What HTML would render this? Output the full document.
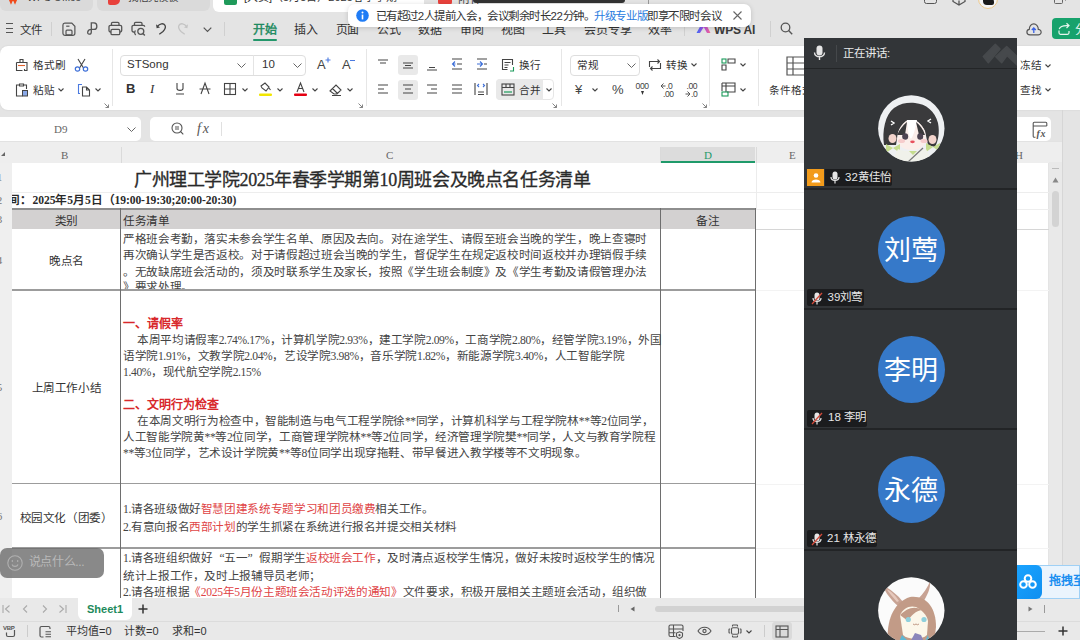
<!DOCTYPE html>
<html lang="zh-CN">
<head>
<meta charset="utf-8">
<style>
*{box-sizing:border-box;margin:0;padding:0}
html,body{width:1080px;height:640px;overflow:hidden;background:#e4e4e4;font-family:"Liberation Sans",sans-serif;color:#333;position:relative}
.a{position:absolute}
.t{position:absolute;white-space:nowrap;line-height:1}
svg{position:absolute;overflow:visible}
/* sheet */
.cell{position:absolute;white-space:nowrap;font-family:"Liberation Serif",serif;font-size:11.6px;color:#444;line-height:16px;letter-spacing:-0.36px}
.red{color:#e04446}
.vl{position:absolute;width:1px;background:#5a5a5a}
.hl{position:absolute;height:1px;background:#5a5a5a}
.gv{position:absolute;width:1px;background:#e3e3e3}
.gh{position:absolute;height:1px;background:#e3e3e3}
.lbl{position:absolute;height:17px;background:#1b1c1e;border-radius:2px;color:#e6e6e6;font-size:11.5px;line-height:17px;white-space:nowrap}
.av{position:absolute;width:67px;height:67px;border-radius:50%;background:#3679c9;color:#fff;font-size:27px;line-height:71px;text-align:center;left:877.7px;letter-spacing:-0.5px;text-indent:-0.5px}
</style>
</head>
<body>
<!-- ============ TOP TAB STRIP ============ -->
<div class="a" style="left:0;top:0;width:93px;height:11px;background:#dadada;border-radius:0 0 6px 6px"></div>
<div class="t" style="left:27px;top:-8px;font-size:10.5px;color:#444">WPS Office</div>
<svg style="left:8px;top:-4px" width="10" height="7" viewBox="0 0 10 7"><path d="M0.5 0.5L3 6.5 5 2 7 6.5 9.5 0.5" fill="none" stroke="#f04a1a" stroke-width="1.8"/></svg>
<div class="a" style="left:97px;top:0;width:113px;height:11px;background:#dadada;border-radius:0 0 6px 6px"></div>
<div class="a" style="left:108px;top:-2px;width:12px;height:6.5px;background:#e8413c;border-radius:0 0 5px 2px"></div>
<div class="t" style="left:128px;top:-8px;font-size:10.5px;color:#444">找稻壳模板</div>
<div class="a" style="left:213px;top:0;width:211px;height:12px;background:#fff;border-radius:0 0 6px 6px"></div>
<div class="a" style="left:224px;top:-2px;width:13px;height:7px;background:#1f9a5a;border-radius:0 0 2px 2px"></div>
<div class="t" style="left:244px;top:-8px;font-size:11px;color:#333">[大赛]（5月5日）2025春季学期</div>
<div class="a" style="left:438px;top:0;width:14px;height:5px;background:#e8413c;border-radius:0 0 3px 3px"></div>
<div class="t" style="left:458px;top:-7px;font-size:12px;color:#444">附件</div>
<div class="a" style="left:473px;top:0;width:152px;height:3px;background:#333;border-radius:0 0 4px 4px"></div>
<div class="a" style="left:648px;top:0;width:1px;height:4px;background:#999"></div>
<div class="a" style="left:924px;top:-4px;width:12.5px;height:8.3px;border:1.3px solid #555;border-radius:2.5px"></div>
<svg style="left:952px;top:-3px" width="14" height="9" viewBox="0 0 14 9"><path d="M1 0V4.5L7 8 13 4.5V0 M7 3.5V8" fill="none" stroke="#555" stroke-width="1.3"/></svg>
<div class="a" style="left:978px;top:-11.5px;width:20px;height:20px;border:1.6px solid #efc98a;border-radius:50%;background:#f4f4f4;overflow:hidden"><div style="position:absolute;left:4px;top:7px;width:11px;height:8px;background:#1a1a1a;border-radius:3px 5px 2px 4px"></div></div>
<div class="a" style="left:1054px;top:-4px;width:9px;height:7.5px;border:1.2px solid #666;border-radius:1.5px;background:#e4e4e4"></div>
<div class="a" style="left:1058px;top:-6px;width:8px;height:7px;border:1.2px solid #666;border-radius:1.5px;border-left:none;border-bottom:none"></div>

<!-- ============ MENU ROW ============ -->
<div id="menu">
<div class="a" style="left:6px;top:23px;width:7px;height:1.3px;background:#555"></div>
<div class="a" style="left:6px;top:27.5px;width:7px;height:1.3px;background:#555"></div>
<div class="a" style="left:6px;top:32px;width:7px;height:1.3px;background:#555"></div>
<div class="t" style="left:20px;top:24.5px;font-size:11.5px;color:#333">文件</div>
<div class="a" style="left:51px;top:22px;width:1px;height:14px;background:#d0d0d0"></div>
<!-- save -->
<svg style="left:62.3px;top:21.6px" width="14" height="14" viewBox="0 0 15 15"><path d="M3 1.2H10.5L13.8 4.5V12A2.3 2.3 0 0 1 11.5 14.3H3.3A2.3 2.3 0 0 1 1 12V3.3A2.1 2.1 0 0 1 3 1.2z" fill="none" stroke="#555" stroke-width="1.3"/><path d="M4.5 4.5H8" stroke="#555" stroke-width="1.3"/><rect x="4.3" y="8.8" width="6.4" height="5" rx="1" fill="none" stroke="#555" stroke-width="1.3"/></svg>
<!-- share -->
<svg style="left:85px;top:21px" width="14" height="15" viewBox="0 0 14 15"><path d="M6.3 11V1.9H9C12.8 1.9 12.8 8.4 9 8.4H6C2.5 8.4 1.5 13.2 4.3 13.2C6.3 13.2 6.3 11.8 6.3 11" fill="none" stroke="#555" stroke-width="1.3"/></svg>
<!-- print -->
<svg style="left:108px;top:21px" width="15" height="15" viewBox="0 0 15 15"><path d="M3.5 4.3V2.5A1.2 1.2 0 0 1 4.7 1.3H9.8A1.2 1.2 0 0 1 11 2.5V4.3" fill="none" stroke="#555" stroke-width="1.3"/><path d="M3 11H2.5A1.5 1.5 0 0 1 1 9.5V5.8A1.5 1.5 0 0 1 2.5 4.3H12.2A1.5 1.5 0 0 1 13.7 5.8V9.5A1.5 1.5 0 0 1 12.2 11H11.8" fill="none" stroke="#555" stroke-width="1.3"/><rect x="3" y="8.3" width="8.8" height="5.4" rx="1.3" fill="none" stroke="#555" stroke-width="1.3"/></svg>
<!-- preview -->
<svg style="left:131px;top:21px" width="15" height="16" viewBox="0 0 15 16"><path d="M3.5 4.3V2.5A1.2 1.2 0 0 1 4.7 1.3H9.8A1.2 1.2 0 0 1 11 2.5V4.3" fill="none" stroke="#555" stroke-width="1.3"/><path d="M3 11H2.5A1.5 1.5 0 0 1 1 9.5V5.8A1.5 1.5 0 0 1 2.5 4.3H12.2A1.5 1.5 0 0 1 13.7 5.8" fill="none" stroke="#555" stroke-width="1.3"/><path d="M4.5 9.5C3.3 10.5 3.3 13 4.8 14" fill="none" stroke="#555" stroke-width="1.3"/><circle cx="9.8" cy="10.3" r="3" fill="none" stroke="#555" stroke-width="1.3"/><path d="M12 12.5L13.8 14.5" stroke="#555" stroke-width="1.4"/></svg>
<!-- undo -->
<svg style="left:152px;top:21px" width="15" height="15" viewBox="0 0 15 15"><path d="M5.5 5.3C7.5 2.5 11.5 1.8 13 4.3C14 6.3 13 8.5 11 10.5L7.3 13.2" fill="none" stroke="#444" stroke-width="1.3"/><path d="M4 3.3L4.6 7.2L8 6.5z" fill="#444"/></svg>
<!-- redo -->
<svg style="left:177px;top:21px" width="15" height="15" viewBox="0 0 15 15"><path d="M9.5 5.3C7.5 2.5 3.5 1.8 2 4.3C1 6.3 2 8.5 4 10.5L7.7 13.2" fill="none" stroke="#c4c4c4" stroke-width="1.3"/><path d="M11 3.3L10.4 7.2L7 6.5z" fill="#c4c4c4"/></svg>
<svg style="left:202.5px;top:26.5px" width="9" height="5" viewBox="0 0 9 5"><path d="M0.7 0.7l3.8 3.8 3.8-3.8" fill="none" stroke="#555" stroke-width="1.2"/></svg>
<div class="a" style="left:224px;top:22px;width:1px;height:14px;background:#d0d0d0"></div>
<div class="t" style="left:253px;top:24.3px;font-size:12px;color:#1d8a60;-webkit-text-stroke:0.45px #1d8a60">开始</div>
<div class="a" style="left:253px;top:38.5px;width:24px;height:2px;background:#23976b;border-radius:1px"></div>
<div class="t" style="left:294px;top:24.3px;font-size:12px;color:#333;letter-spacing:-0.1px">插入</div>
<div class="t" style="left:335.5px;top:24.3px;font-size:12px;color:#333;letter-spacing:-0.1px">页面</div>
<div class="t" style="left:377px;top:24.3px;font-size:12px;color:#333;letter-spacing:-0.1px">公式</div>
<div class="t" style="left:418px;top:24.3px;font-size:12px;color:#333;letter-spacing:-0.1px">数据</div>
<div class="t" style="left:460px;top:24.3px;font-size:12px;color:#333;letter-spacing:-0.1px">审阅</div>
<div class="t" style="left:501px;top:24.3px;font-size:12px;color:#333;letter-spacing:-0.1px">视图</div>
<div class="t" style="left:542px;top:24.3px;font-size:12px;color:#333;letter-spacing:-0.1px">工具</div>
<div class="t" style="left:584px;top:24.3px;font-size:12px;color:#333;letter-spacing:-0.1px">会员专享</div>
<div class="t" style="left:648px;top:24.3px;font-size:12px;color:#333;letter-spacing:-0.1px">效率</div>
<div class="a" style="left:684px;top:22px;width:1px;height:14px;background:#d0d0d0"></div>
<svg style="left:696px;top:22px" width="15" height="12" viewBox="0 0 15 12"><defs><linearGradient id="wg" x1="0" y1="0" x2="1" y2="0"><stop offset="0" stop-color="#3a6cf6"/><stop offset="0.55" stop-color="#b84de0"/><stop offset="1" stop-color="#f56a8a"/></linearGradient></defs><path d="M0.5 11L6 1H9.5L14.5 11H11L7.8 5L4 11z" fill="url(#wg)"/></svg>
<div class="t" style="left:714px;top:23.5px;font-size:12px;color:#3a3a3a;font-weight:bold;letter-spacing:-0.2px">WPS AI</div>
<div class="a" style="left:770px;top:21px;width:1px;height:16px;background:#d0d0d0"></div>
<svg style="left:780px;top:22px" width="13" height="13" viewBox="0 0 13 13"><circle cx="5.5" cy="5.5" r="4.3" fill="none" stroke="#555" stroke-width="1.3"/><path d="M8.6 8.6l3.6 3.6" stroke="#555" stroke-width="1.4"/></svg>
<!-- cloud -->
<svg style="left:1026px;top:21.5px" width="17" height="15" viewBox="0 0 17 15"><path d="M4 12.8H12.3C14.6 12.8 15.8 10.8 14.8 8.8C14.2 7.8 13.3 7.3 12.3 7.3C12.3 4 10 1.8 7.8 1.8C5.3 1.8 3.3 4 3.3 7.3C1.8 7.5 0.9 8.8 0.9 10C0.9 11.6 2.2 12.8 4 12.8z" fill="none" stroke="#555" stroke-width="1.2"/><path d="M7.8 11V6 M5.8 8L7.8 6L9.8 8" fill="none" stroke="#3a63e8" stroke-width="1.3"/></svg>
<div class="a" style="left:1052px;top:18px;width:40px;height:21px;background:#17a26c;border-radius:4px"></div>
<svg style="left:1057px;top:22px" width="14" height="14" viewBox="0 0 14 14"><path d="M2.2 7.2C3 4.5 6 3.2 11.5 3.6 M9.5 1.2L12 3.6 9.5 6" fill="none" stroke="#e6f6ee" stroke-width="1.2"/><path d="M2 8.5V10.8Q2 12.3 3.5 12.3H10.5Q12 12.3 12 10.8V9" fill="none" stroke="#e6f6ee" stroke-width="1.2"/></svg>
<div class="t" style="left:1075px;top:23.5px;font-size:12px;color:#e6f6ee">分</div>
</div>

<!-- ============ RIBBON ============ -->
<div class="a" style="left:0;top:46px;width:1080px;height:64px;background:#fff;border-radius:8px 0 0 8px;box-shadow:0 0 2px rgba(0,0,0,0.10)"></div>
<!-- clipboard group -->
<svg style="left:15px;top:58px" width="14" height="14" viewBox="0 0 14 14"><path d="M5 4V1.5h3V4 M1.5 4.5h10.5v2.5 M1.5 4.5v8h6 M12 7v5.5h-2.5v-1.5" fill="none" stroke="#444" stroke-width="1.1"/><path d="M3 7.5h7" stroke="#e0602b" stroke-width="1.1"/></svg>
<div class="t" style="left:33px;top:60px;font-size:10.6px;color:#333">格式刷</div>
<svg style="left:74px;top:58px" width="15" height="14" viewBox="0 0 15 14"><path d="M4 1l5.5 9 M11 1L5.5 10" stroke="#444" stroke-width="1.1" fill="none"/><circle cx="3.5" cy="11" r="2.2" fill="none" stroke="#3d6fd8" stroke-width="1.2"/><circle cx="11.5" cy="11" r="2.2" fill="none" stroke="#3d6fd8" stroke-width="1.2"/></svg>
<svg style="left:15px;top:83px" width="14" height="14" viewBox="0 0 14 14"><path d="M4.5 2H1.5v11h6 M9 2h2.5v4 M4.5 1h4v2h-4z" fill="none" stroke="#444" stroke-width="1.1"/><rect x="7.5" y="7.5" width="5" height="5.5" fill="#8aa9e8" stroke="#444" stroke-width="1"/></svg>
<div class="t" style="left:33px;top:85.3px;font-size:10.6px;color:#333">粘贴</div>
<svg style="left:58px;top:88px" width="6" height="4" viewBox="0 0 6 4"><path d="M0.5 0.5l2.5 2.5 2.5-2.5" fill="none" stroke="#444" stroke-width="1.1"/></svg>
<svg style="left:77px;top:83px" width="14" height="14" viewBox="0 0 14 14"><path d="M5 1.5H1.5v9H3" fill="none" stroke="#4b7ae0" stroke-width="1.1"/><path d="M5.5 4h4l3 3v6h-7z M9.5 4v3h3" fill="none" stroke="#444" stroke-width="1.1"/></svg>
<svg style="left:95px;top:88px" width="6" height="4" viewBox="0 0 6 4"><path d="M0.5 0.5l2.5 2.5 2.5-2.5" fill="none" stroke="#444" stroke-width="1.1"/></svg>
<svg style="left:104px;top:103px" width="5" height="5" viewBox="0 0 5 5"><path d="M0.5 0.5l4 4 M4.5 1.5v3h-3" fill="none" stroke="#777" stroke-width="0.9"/></svg>
<div class="a" style="left:112px;top:49px;width:1px;height:57px;background:#e6e6e6"></div>
<!-- font group -->
<div class="a" style="left:120px;top:54.5px;width:186px;height:21px;border:1px solid #dedede;border-radius:4px"></div>
<div class="a" style="left:253px;top:55px;width:1px;height:20px;background:#e4e4e4"></div>
<div class="t" style="left:127px;top:59px;font-size:11.5px;color:#333">STSong</div>
<svg style="left:237px;top:63px" width="9" height="5" viewBox="0 0 9 5"><path d="M0.5 0.5l4 4 4-4" fill="none" stroke="#666" stroke-width="1"/></svg>
<div class="t" style="left:262px;top:59px;font-size:11.5px;color:#333">10</div>
<svg style="left:293px;top:63px" width="9" height="5" viewBox="0 0 9 5"><path d="M0.5 0.5l4 4 4-4" fill="none" stroke="#666" stroke-width="1"/></svg>
<div class="t" style="left:317px;top:58px;font-size:13px;color:#444">A</div>
<svg style="left:325px;top:57px" width="6" height="6" viewBox="0 0 6 6"><path d="M3 0.5v5 M0.5 3h5" stroke="#4b7ae0" stroke-width="1.1"/></svg>
<div class="t" style="left:342px;top:58px;font-size:13px;color:#444">A</div>
<div class="a" style="left:350px;top:59.5px;width:5px;height:1px;background:#4b7ae0"></div>
<div class="t" style="left:126px;top:82px;font-size:13px;color:#333;font-weight:bold">B</div>
<div class="t" style="left:150px;top:82px;font-size:13px;color:#333;font-style:italic;font-family:'Liberation Serif',serif">I</div>
<svg style="left:175px;top:82px" width="10" height="13" viewBox="0 0 10 13"><path d="M2 1v5.5C2 9 8 9 8 6.5V1 M1 12h8" fill="none" stroke="#444" stroke-width="1.1"/></svg>
<svg style="left:199px;top:82px" width="12" height="13" viewBox="0 0 12 13"><path d="M2 12L6 1l4 11 M0.5 7h11" fill="none" stroke="#444" stroke-width="1.1"/></svg>
<svg style="left:224px;top:83px" width="12" height="12" viewBox="0 0 12 12"><rect x="0.5" y="0.5" width="11" height="11" fill="none" stroke="#444" stroke-width="1.1"/><path d="M6 0.5v11 M0.5 6h11" stroke="#444" stroke-width="1.1"/></svg>
<svg style="left:242px;top:88px" width="6" height="4" viewBox="0 0 6 4"><path d="M0.5 0.5l2.5 2.5 2.5-2.5" fill="none" stroke="#444" stroke-width="1.1"/></svg>
<svg style="left:259px;top:82px" width="13" height="14" viewBox="0 0 13 14"><path d="M2 4l4-3 4 4-3 4-4-3z M10 6l1.5 2" fill="none" stroke="#444" stroke-width="1.1"/><rect x="0" y="11.5" width="13" height="2.5" rx="1" fill="#f2e600"/></svg>
<svg style="left:277px;top:88px" width="6" height="4" viewBox="0 0 6 4"><path d="M0.5 0.5l2.5 2.5 2.5-2.5" fill="none" stroke="#444" stroke-width="1.1"/></svg>
<svg style="left:294px;top:82px" width="13" height="14" viewBox="0 0 13 14"><path d="M3 10L6.5 1 10 10 M4.3 6.5h4.5" fill="none" stroke="#444" stroke-width="1.1"/><rect x="0" y="11.5" width="13" height="2.5" rx="1" fill="#e50012"/></svg>
<svg style="left:312px;top:88px" width="6" height="4" viewBox="0 0 6 4"><path d="M0.5 0.5l2.5 2.5 2.5-2.5" fill="none" stroke="#444" stroke-width="1.1"/></svg>
<svg style="left:329px;top:83px" width="14" height="13" viewBox="0 0 14 13"><path d="M1 8l6-6 5 5-4 4H5z M3.5 5.5l5 5 M3 12.5h9" fill="none" stroke="#444" stroke-width="1.1"/></svg>
<svg style="left:347px;top:88px" width="6" height="4" viewBox="0 0 6 4"><path d="M0.5 0.5l2.5 2.5 2.5-2.5" fill="none" stroke="#444" stroke-width="1.1"/></svg>
<svg style="left:358px;top:103px" width="5" height="5" viewBox="0 0 5 5"><path d="M0.5 0.5l4 4 M4.5 1.5v3h-3" fill="none" stroke="#777" stroke-width="0.9"/></svg>
<div class="a" style="left:365.5px;top:49px;width:1px;height:57px;background:#e6e6e6"></div>
<!-- alignment group -->
<div class="a" style="left:398px;top:55px;width:20px;height:20px;background:#e9e9e9;border-radius:3px"></div>
<div class="a" style="left:398px;top:79.5px;width:20px;height:20px;background:#e9e9e9;border-radius:3px"></div>
<svg style="left:377px;top:58px" width="12" height="12" viewBox="0 0 12 12"><path d="M1 2h10 M3 5h6" stroke="#444" stroke-width="1.1"/></svg>
<svg style="left:402px;top:59px" width="12" height="12" viewBox="0 0 12 12"><path d="M1 4h10 M3 6.5h6 M1 9h10" stroke="#444" stroke-width="1.1"/></svg>
<svg style="left:426px;top:60px" width="12" height="12" viewBox="0 0 12 12"><path d="M3 7.5h6 M1 10h10" stroke="#444" stroke-width="1.1"/></svg>
<svg style="left:451px;top:58px" width="12" height="12" viewBox="0 0 12 12"><path d="M1 1h10 M1 11h10 M6 6h5" stroke="#444" stroke-width="1.1"/><path d="M4 3.5L1.5 6 4 8.5 M1.5 6h3" fill="none" stroke="#3d6fd8" stroke-width="1.1"/></svg>
<svg style="left:476px;top:58px" width="12" height="12" viewBox="0 0 12 12"><path d="M1 1h10 M1 11h10 M8 6h3" stroke="#444" stroke-width="1.1"/><path d="M4 3.5L6.5 6 4 8.5 M1 6h5" fill="none" stroke="#3d6fd8" stroke-width="1.1"/></svg>
<svg style="left:501px;top:58px" width="14" height="14" viewBox="0 0 14 14"><path d="M11.5 7V1.5H1.5v10h5 M3.5 4.5h6 M3.5 7h4 M3.5 9.5h3" fill="none" stroke="#444" stroke-width="1.1"/><path d="M9 13h3.5V9" fill="none" stroke="#1a9a5a" stroke-width="1.1"/></svg>
<div class="t" style="left:519px;top:60px;font-size:10.6px;color:#333">换行</div>
<svg style="left:377px;top:83px" width="12" height="12" viewBox="0 0 12 12"><path d="M1 2h10 M1 6h6 M1 10h10" stroke="#444" stroke-width="1.1"/></svg>
<svg style="left:402px;top:83px" width="12" height="12" viewBox="0 0 12 12"><path d="M1 2h10 M3 6h6 M1 10h10" stroke="#444" stroke-width="1.1"/></svg>
<svg style="left:426px;top:83px" width="12" height="12" viewBox="0 0 12 12"><path d="M1 2h10 M5 6h6 M1 10h10" stroke="#444" stroke-width="1.1"/></svg>
<svg style="left:451px;top:83px" width="12" height="12" viewBox="0 0 12 12"><path d="M1 2h10 M1 6h10 M1 10h10" stroke="#444" stroke-width="1.1"/></svg>
<svg style="left:474px;top:82px" width="14" height="14" viewBox="0 0 14 14"><path d="M1 1v12 M13 1v12 M4 10h6 M4 12.5h6" stroke="#444" stroke-width="1.1" fill="none"/><path d="M5 2L3.5 3.5 5 5 M9 2l1.5 1.5L9 5" fill="none" stroke="#3d6fd8" stroke-width="1.1"/></svg>
<div class="a" style="left:496px;top:79px;width:58px;height:20.5px;border:1px solid #e6e6e6;border-radius:4px"></div>
<div class="a" style="left:496px;top:79px;width:46.5px;height:20.5px;background:#e9e9e9;border-radius:4px 0 0 4px"></div>
<svg style="left:501px;top:83px" width="14" height="13" viewBox="0 0 14 13"><rect x="1" y="1" width="12" height="11" fill="none" stroke="#444" stroke-width="1.1"/><path d="M1 4.5h12 M5 1v3.5 M9 1v3.5" stroke="#444" stroke-width="1.1"/><path d="M3 9h8" stroke="#1a9a5a" stroke-width="1.2"/></svg>
<div class="t" style="left:519px;top:85.3px;font-size:10.6px;color:#333">合并</div>
<svg style="left:546px;top:88px" width="6" height="4" viewBox="0 0 6 4"><path d="M0.5 0.5l2.5 2.5 2.5-2.5" fill="none" stroke="#444" stroke-width="1.1"/></svg>
<svg style="left:552px;top:103px" width="5" height="5" viewBox="0 0 5 5"><path d="M0.5 0.5l4 4 M4.5 1.5v3h-3" fill="none" stroke="#777" stroke-width="0.9"/></svg>
<div class="a" style="left:561px;top:49px;width:1px;height:57px;background:#e6e6e6"></div>
<!-- number group -->
<div class="a" style="left:569.5px;top:55px;width:70px;height:20.5px;border:1px solid #dedede;border-radius:4px"></div>
<div class="t" style="left:577px;top:60px;font-size:10.6px;color:#333">常规</div>
<svg style="left:627px;top:63px" width="9" height="5" viewBox="0 0 9 5"><path d="M0.5 0.5l4 4 4-4" fill="none" stroke="#666" stroke-width="1"/></svg>
<svg style="left:648px;top:58px" width="14" height="14" viewBox="0 0 14 14"><path d="M1.5 9V3.5h10 M9.5 1.5l2 2-2 2 M12.5 5v5.5h-10 M4.5 12.5l-2-2 2-2" fill="none" stroke="#444" stroke-width="1.1"/></svg>
<div class="t" style="left:666px;top:60px;font-size:10.6px;color:#333">转换</div>
<svg style="left:691px;top:63px" width="6" height="4" viewBox="0 0 6 4"><path d="M0.5 0.5l2.5 2.5 2.5-2.5" fill="none" stroke="#444" stroke-width="1.1"/></svg>
<div class="t" style="left:575px;top:83px;font-size:13px;color:#444">¥</div>
<svg style="left:592px;top:88px" width="6" height="4" viewBox="0 0 6 4"><path d="M0.5 0.5l2.5 2.5 2.5-2.5" fill="none" stroke="#444" stroke-width="1.1"/></svg>
<div class="t" style="left:612px;top:83px;font-size:13px;color:#444">%</div>
<div class="t" style="left:635.5px;top:81.5px;font-size:8.6px;color:#444;letter-spacing:-0.4px">000</div>
<svg style="left:641px;top:91px" width="3" height="4" viewBox="0 0 3 4"><path d="M0 0h3L1.5 4z" fill="#333"/></svg>
<svg style="left:660px;top:82px" width="6" height="8" viewBox="0 0 6 8"><path d="M5.5 4H1 M3.5 1.5L1 4l2.5 2.5" fill="none" stroke="#555" stroke-width="1"/></svg>
<div class="t" style="left:666px;top:81.5px;font-size:8.6px;color:#444;letter-spacing:-0.4px">.0</div>
<div class="t" style="left:663px;top:89.5px;font-size:8.6px;color:#444;letter-spacing:-0.4px">.00</div>
<div class="t" style="left:686.5px;top:81.5px;font-size:8.6px;color:#444;letter-spacing:-0.4px">.00</div>
<svg style="left:685px;top:90px" width="6" height="8" viewBox="0 0 6 8"><path d="M0.5 4H5 M2.5 1.5L5 4 2.5 6.5" fill="none" stroke="#555" stroke-width="1"/></svg>
<div class="t" style="left:691px;top:89.5px;font-size:8.6px;color:#444;letter-spacing:-0.4px">.0</div>
<svg style="left:702px;top:103px" width="5" height="5" viewBox="0 0 5 5"><path d="M0.5 0.5l4 4 M4.5 1.5v3h-3" fill="none" stroke="#777" stroke-width="0.9"/></svg>
<div class="a" style="left:709px;top:49px;width:1px;height:57px;background:#e6e6e6"></div>
<svg style="left:721px;top:58px" width="15" height="14" viewBox="0 0 15 14"><rect x="1" y="1" width="4" height="4" fill="none" stroke="#1a9a5a" stroke-width="1.1"/><path d="M1 7h4v5H1z M7 1h7v4H7z" fill="none" stroke="#444" stroke-width="1.1"/></svg>
<svg style="left:740px;top:63px" width="6" height="4" viewBox="0 0 6 4"><path d="M0.5 0.5l2.5 2.5 2.5-2.5" fill="none" stroke="#444" stroke-width="1.1"/></svg>
<svg style="left:721px;top:82px" width="15" height="15" viewBox="0 0 15 15"><path d="M1 1h13v9H6 M1 4h13 M5 1v9 M1 1v8" fill="none" stroke="#444" stroke-width="1.1"/><rect x="1" y="10" width="6" height="4" fill="none" stroke="#1a9a5a" stroke-width="1.1"/></svg>
<svg style="left:740px;top:88px" width="6" height="4" viewBox="0 0 6 4"><path d="M0.5 0.5l2.5 2.5 2.5-2.5" fill="none" stroke="#444" stroke-width="1.1"/></svg>
<div class="a" style="left:758px;top:49px;width:1px;height:57px;background:#e6e6e6"></div>
<svg style="left:786px;top:56px" width="20" height="20" viewBox="0 0 20 20"><path d="M1 1h18v18H1z M1 7h18 M1 13h18 M7 1v18" fill="none" stroke="#555" stroke-width="1.2"/></svg>
<div class="t" style="left:769px;top:85.3px;font-size:10.6px;color:#333">条件格式</div>
<div class="t" style="left:1020px;top:60px;font-size:10.6px;color:#333">冻结</div>
<svg style="left:1045px;top:64px" width="6" height="4" viewBox="0 0 6 4"><path d="M0.5 0.5l2.5 2.5 2.5-2.5" fill="none" stroke="#444" stroke-width="1.1"/></svg>
<div class="t" style="left:1020px;top:85.3px;font-size:10.6px;color:#333">查找</div>
<svg style="left:1045px;top:88px" width="6" height="4" viewBox="0 0 6 4"><path d="M0.5 0.5l2.5 2.5 2.5-2.5" fill="none" stroke="#444" stroke-width="1.1"/></svg>

<!-- ============ FORMULA BAR ============ -->
<div class="a" style="left:0;top:117px;width:141px;height:23.5px;background:#fff;border-radius:0 5px 5px 0"></div>
<div class="t" style="left:54px;top:123.5px;font-size:11px;color:#666;font-family:'Liberation Serif',serif">D9</div>
<svg style="left:127px;top:127px" width="9" height="5" viewBox="0 0 9 5"><path d="M0.5 0.5l4 4 4-4" fill="none" stroke="#666" stroke-width="1"/></svg>
<div class="a" style="left:150px;top:117px;width:901px;height:24px;background:#fff;border-radius:5px"></div>
<svg style="left:171px;top:122px" width="13" height="13" viewBox="0 0 13 13"><circle cx="6" cy="6" r="5" fill="none" stroke="#555" stroke-width="1.1"/><path d="M9.5 9.5l2.8 2.8 M4 5h4 M4 7h4" stroke="#555" stroke-width="1.1"/></svg>
<div class="t" style="left:197px;top:122px;font-size:14px;color:#555;font-style:italic;font-family:'Liberation Serif',serif;letter-spacing:1.8px">fx</div>
<div class="a" style="left:221px;top:122px;width:1px;height:14px;background:#e0e0e0"></div>
<svg style="left:1031.5px;top:120.5px" width="17" height="18" viewBox="0 0 17 18"><path d="M3.5 16.3H2.3Q1.2 16.3 1.2 15.2V2.3Q1.2 1.2 2.3 1.2H13.7Q14.8 1.2 14.8 2.3V5 M1.2 5H14.8" fill="none" stroke="#555" stroke-width="1.1"/><text x="4.5" y="16" font-size="10" font-style="italic" font-weight="bold" fill="#555" font-family="Liberation Serif" letter-spacing="0.6">fx</text></svg>


<!-- ============ COLUMN HEADERS ============ -->
<div class="a" style="left:0;top:141.5px;width:1062px;height:21px;background:#eeeeee"></div><div class="a" style="left:0;top:140.5px;width:1062px;height:1.5px;background:#e2e2e2"></div>
<div class="a" style="left:660.3px;top:147px;width:95.2px;height:15.5px;background:#dcdcdc"></div>
<div class="a" style="left:660.3px;top:160.5px;width:95.2px;height:2px;background:#1f9a6a"></div>

<div class="gv" style="left:120.5px;top:147px;height:15.5px;background:#dadada"></div>
<div class="gv" style="left:660.3px;top:147px;height:15.5px;background:#dadada"></div>
<div class="gv" style="left:755.5px;top:147px;height:15.5px;background:#dadada"></div>
<svg style="left:0px;top:151px" width="6" height="6" viewBox="0 0 6 6"><path d="M5 1v4H1z" fill="#666"/></svg>
<div class="t" style="left:61px;top:150px;font-size:11px;color:#666;font-family:'Liberation Serif',serif">B</div>
<div class="t" style="left:386px;top:150px;font-size:11px;color:#666;font-family:'Liberation Serif',serif">C</div>
<div class="t" style="left:704px;top:150px;font-size:11px;color:#1f9a6a;font-family:'Liberation Serif',serif">D</div>
<div class="t" style="left:789px;top:150px;font-size:11px;color:#666;font-family:'Liberation Serif',serif">E</div>
<div class="t" style="left:1015px;top:150px;font-size:11px;color:#666;font-family:'Liberation Serif',serif">H</div>
<!-- row header -->
<div class="a" style="left:0;top:162.5px;width:11.6px;height:435.5px;background:#efefef"></div>
<div class="t" style="left:-3.3px;top:172px;font-size:11px;color:#777;font-family:'Liberation Serif',serif">1</div>
<div class="t" style="left:-3.3px;top:195px;font-size:11px;color:#777;font-family:'Liberation Serif',serif">2</div>
<div class="t" style="left:-3.3px;top:214px;font-size:11px;color:#777;font-family:'Liberation Serif',serif">3</div>
<div class="t" style="left:-3.3px;top:255px;font-size:11px;color:#777;font-family:'Liberation Serif',serif">4</div>
<div class="t" style="left:-3.3px;top:382px;font-size:11px;color:#777;font-family:'Liberation Serif',serif">5</div>
<div class="t" style="left:-3.3px;top:511px;font-size:11px;color:#777;font-family:'Liberation Serif',serif">6</div>
<!-- cells bg -->
<div class="a" style="left:11.6px;top:162.5px;width:1036.9px;height:435.5px;background:#fff"></div>
<!-- vscroll column -->
<div class="a" style="left:1048.5px;top:162px;width:13.5px;height:436px;background:#e9e9e9"></div>
<div class="a" style="left:1052px;top:168px;width:7px;height:1.2px;background:#bbb"></div>
<svg style="left:1052px;top:177px" width="7" height="6" viewBox="0 0 7 6"><path d="M3.5 0.5L6.5 5.5H0.5z" fill="#888"/></svg>
<div class="a" style="left:1052px;top:191px;width:7px;height:36px;background:#d3d3d3;border-radius:4px"></div>
<div class="a" style="left:1062px;top:110px;width:1px;height:530px;background:#d6d6d6"></div>
<!-- grid lines faint -->
<div class="gh" style="left:11.6px;top:191.5px;width:1037px;background:#ededed"></div>
<div class="gh" style="left:755.5px;top:208.5px;width:293px;background:#eeeeee"></div>
<div class="gh" style="left:755.5px;top:229px;width:293px;background:#d6d6d6"></div>
<div class="gh" style="left:755.5px;top:289.5px;width:293px;background:#f3f3f3"></div>
<div class="gh" style="left:755.5px;top:483.5px;width:293px;background:#f3f3f3"></div>
<div class="gh" style="left:755.5px;top:548px;width:293px;background:#f3f3f3"></div>
<div class="gv" style="left:755.5px;top:162.5px;height:46px;background:#ececec"></div>
<!-- header row fill -->
<div class="a" style="left:11.6px;top:208.7px;width:744px;height:20.7px;background:#d3d1d1"></div>
<!-- table borders -->
<div class="hl" style="left:11.6px;top:208.1px;width:744.4px;height:1.6px;background:#8e8e8e"></div>
<div class="hl" style="left:11.6px;top:288.9px;width:744.4px;height:1.7px;background:#9c9c9c"></div>
<div class="hl" style="left:11.6px;top:482.6px;width:744.4px;height:1.7px;background:#9c9c9c"></div>
<div class="hl" style="left:11.6px;top:547px;width:744.4px;height:1.7px;background:#9c9c9c"></div>
<div class="vl" style="left:119.9px;top:208.3px;height:389.7px;width:1.3px;background:#6e6e6e"></div>
<div class="vl" style="left:659.9px;top:208.3px;height:389.7px;width:1.3px;background:#6e6e6e"></div>
<div class="vl" style="left:754.9px;top:208.3px;height:389.7px;width:1.3px;background:#6e6e6e"></div>
<!-- title -->
<div class="cell" style="left:134px;top:169.5px;font-size:18px;line-height:20px;font-weight:normal;-webkit-text-stroke:0.3px #2a2a2a;color:#2a2a2a;letter-spacing:-0.4px">广州理工学院2025年春季学期第10周班会及晚点名任务清单</div>
<div class="a" style="left:11.7px;top:192.5px;width:500px;height:16px;overflow:hidden">
<div class="cell" style="right:479.5px;top:0.5px;font-size:11.6px;font-weight:bold;color:#2a2a2a;letter-spacing:0">时间：</div>
<div class="cell" id="r2" style="left:20.8px;top:0.5px;font-size:11.6px;font-weight:bold;color:#2a2a2a;letter-spacing:-0.08px">2025年5月5日（19:00-19:30;20:00-20:30)</div>
</div>
<div class="cell" style="left:54.5px;top:214px;color:#333">类别</div>
<div class="cell" style="left:123px;top:214px;color:#333">任务清单</div>
<div class="cell" style="left:696px;top:214px;color:#333">备注</div>
<div class="cell" style="left:49px;top:254.3px;color:#333">晚点名</div>
<div class="cell" style="left:31.5px;top:381.4px;color:#333">上周工作小结</div>
<div class="cell" style="left:19.5px;top:511.4px;color:#333">校园文化（团委）</div>
<!-- row 4 -->
<div class="a" style="left:121px;top:230px;width:539px;height:59px;overflow:hidden">
<div class="cell" style="left:2px;top:1.6px">严格班会考勤，落实未参会学生名单、原因及去向。对在途学生、请假至班会当晚的学生，晚上查寝时</div>
<div class="cell" style="left:2px;top:18.2px">再次确认学生是否返校。对于请假超过班会当晚的学生，督促学生在规定返校时间返校并办理销假手续</div>
<div class="cell" style="left:2px;top:34.7px">。无故缺席班会活动的，须及时联系学生及家长，按照《学生班会制度》及《学生考勤及请假管理办法</div>
<div class="cell" style="left:2px;top:50px">》要求处理。</div>
</div>
<!-- row 5 -->
<div class="cell red" style="left:122.5px;top:315.7px;font-weight:bold;font-size:12px;letter-spacing:0.1px;color:#d8282c">一、请假率</div>
<div class="cell" style="left:123px;top:333px">　 本周平均请假率2.74%.17%，计算机学院2.93%，建工学院2.09%，工商学院2.80%，经管学院3.19%，外国</div>
<div class="cell" style="left:123px;top:349px">语学院1.91%，文教学院2.04%，艺设学院3.98%，音乐学院1.82%，新能源学院3.40%，人工智能学院</div>
<div class="cell" style="left:123px;top:365px">1.40%，现代航空学院2.15%</div>
<div class="cell red" style="left:122.5px;top:396.7px;font-weight:bold;font-size:12px;letter-spacing:0.1px;color:#d8282c">二、文明行为检查</div>
<div class="cell" style="left:123px;top:414px">　 在本周文明行为检查中，智能制造与电气工程学院徐**同学，计算机科学与工程学院林**等2位同学，</div>
<div class="cell" style="left:123px;top:430px">人工智能学院黄**等2位同学，工商管理学院林**等2位同学，经济管理学院樊**同学，人文与教育学院程</div>
<div class="cell" style="left:123px;top:446px">**等3位同学，艺术设计学院黄**等8位同学出现穿拖鞋、带早餐进入教学楼等不文明现象。</div>
<!-- row 6 -->
<div class="cell" style="left:123px;top:502px">1.请各班级做好<span class="red">智慧团建系统专题学习和团员缴费</span>相关工作。</div>
<div class="cell" style="left:123px;top:520px">2.有意向报名<span class="red">西部计划</span>的学生抓紧在系统进行报名并提交相关材料</div>
<!-- row 7 -->
<div class="a" style="left:121px;top:548.5px;width:539px;height:49.5px;overflow:hidden">
<div class="cell" style="left:2px;top:2.8px">1.请各班组织做好<span style="padding-left:7px">“</span>五一<span style="padding-right:7px">”</span>假期学生<span class="red">返校班会工作</span>，及时清点返校学生情况，做好未按时返校学生的情况</div>
<div class="cell" style="left:2px;top:20.4px">统计上报工作，及时上报辅导员老师；</div>
<div class="cell" style="left:2px;top:36.5px">2.请各班根据<span class="red">《2025年5月份主题班会活动评选的通知》</span>文件要求，积极开展相关主题班会活动，组织做</div>
</div>


<!-- ============ SHEET TABS ============ -->
<div class="a" style="left:0;top:598px;width:1080px;height:22.5px;background:#e9e9e9"></div>
<svg style="left:2px;top:604px" width="9" height="10" viewBox="0 0 9 10"><path d="M1 1v8 M7.5 1.5L3.5 5l4 3.5" fill="none" stroke="#aaa" stroke-width="1.1"/></svg>
<svg style="left:22px;top:604px" width="6" height="10" viewBox="0 0 6 10"><path d="M5 1.5L1.5 5 5 8.5" fill="none" stroke="#aaa" stroke-width="1.1"/></svg>
<svg style="left:42px;top:604px" width="6" height="10" viewBox="0 0 6 10"><path d="M1 1.5L4.5 5 1 8.5" fill="none" stroke="#aaa" stroke-width="1.1"/></svg>
<svg style="left:58px;top:604px" width="9" height="10" viewBox="0 0 9 10"><path d="M8 1v8 M1.5 1.5L5.5 5l-4 3.5" fill="none" stroke="#aaa" stroke-width="1.1"/></svg>
<div class="a" style="left:77.5px;top:598px;width:54.5px;height:21.5px;background:#fff;border-radius:0 0 6px 6px"></div>
<div class="t" style="left:87px;top:603.5px;font-size:11px;color:#1e8a5c;font-weight:bold">Sheet1</div>
<svg style="left:138px;top:604px" width="10" height="10" viewBox="0 0 10 10"><path d="M5 0.5v9 M0.5 5h9" stroke="#333" stroke-width="1.5"/></svg>
<div class="a" style="left:618px;top:605px;width:1px;height:7px;background:#999"></div>
<svg style="left:630px;top:606px" width="5" height="6" viewBox="0 0 5 6"><path d="M4.5 0.5v5L0.5 3z" fill="#666"/></svg>
<div class="a" style="left:654.5px;top:605.5px;width:400px;height:6.5px;background:#d2d2d2;border-radius:3px"></div>
<div class="a" style="left:1017px;top:598px;width:63px;height:22.5px;background:#e9e9e9"></div>
<svg style="left:1028px;top:606px" width="5" height="6" viewBox="0 0 5 6"><path d="M0.5 0.5v5L4.5 3z" fill="#777"/></svg>
<div class="a" style="left:1044px;top:604.5px;width:1px;height:8px;background:#999"></div>
<!-- ============ STATUS BAR ============ -->
<div class="a" style="left:0;top:620.5px;width:1080px;height:1px;background:#dcdcdc"></div>
<div class="a" style="left:0;top:621.5px;width:1080px;height:18.5px;background:#e9e9e9"></div>
<svg style="left:2px;top:624px" width="15" height="15" viewBox="0 0 15 15"><text x="1" y="5.8" font-size="6" font-weight="bold" fill="#555" font-family="Liberation Sans" letter-spacing="-0.3">VBP</text><path d="M4.5 8.5v2.5q0 1.5 1.5 1.5h5q1.5 0 1.5-1.5V6" fill="none" stroke="#555" stroke-width="1.2"/></svg>
<div class="a" style="left:27px;top:625px;width:1px;height:12px;background:#ccc"></div>
<svg style="left:39px;top:624.5px" width="14" height="13" viewBox="0 0 14 13"><path d="M4.5 12H2.5Q1 12 1 10.5V3Q1 1.5 2.5 1.5H9.5Q11 1.5 11 3V4" fill="none" stroke="#555" stroke-width="1.2"/><path d="M6.5 6.8H12 M6.5 9.3H12 M6.5 11.8H12" stroke="#555" stroke-width="1.1"/></svg>
<div class="t" style="left:66px;top:625.5px;font-size:11px;color:#333">平均值=0</div>
<div class="t" style="left:124px;top:625.5px;font-size:11px;color:#333">计数=0</div>
<div class="t" style="left:172px;top:625.5px;font-size:11px;color:#333">求和=0</div>
<svg style="left:668px;top:624px" width="17" height="15" viewBox="0 0 17 15"><path d="M7.5 12.5H2.5Q1 12.5 1 11V2.5Q1 1 2.5 1H13.5Q15 1 15 2.5V7 M1 5H15 M1 8.7H7.5 M5.5 1V12.5" fill="none" stroke="#555" stroke-width="1.1"/><path d="M11.5 7.8L14.5 9V11.8Q14.5 13.5 11.5 14.5Q8.5 13.5 8.5 11.8V9z" fill="#e9e9e9" stroke="#555" stroke-width="1.1"/><circle cx="11.5" cy="11.2" r="1.1" fill="#555"/></svg>
<svg style="left:697px;top:626px" width="15" height="10" viewBox="0 0 15 10"><path d="M1 5C4 0 11 0 14 5C11 10 4 10 1 5z" fill="none" stroke="#555" stroke-width="1.1"/><circle cx="7.5" cy="5" r="1.6" fill="none" stroke="#555" stroke-width="1.1"/></svg>
<svg style="left:728px;top:624px" width="14" height="14" viewBox="0 0 14 14"><rect x="3.5" y="3.8" width="7" height="6.4" rx="1.5" fill="none" stroke="#555" stroke-width="1.1"/><path d="M4.5 2.5V1.5Q4.5 1 5 1H9Q9.5 1 9.5 1.5V2.5 M4.5 11.5V12.5Q4.5 13 5 13H9Q9.5 13 9.5 12.5V11.5 M2.2 5H1.5Q1 5 1 5.5V8.5Q1 9 1.5 9H2.2 M11.8 5H12.5Q13 5 13 5.5V8.5Q13 9 12.5 9H11.8" fill="none" stroke="#555" stroke-width="1.1"/></svg>
<svg style="left:746px;top:630px" width="6" height="4" viewBox="0 0 6 4"><path d="M0.5 0.5l2.5 2.5 2.5-2.5" fill="none" stroke="#444" stroke-width="1.1"/></svg>
<div class="a" style="left:764px;top:625px;width:1px;height:12px;background:#ccc"></div>
<div class="a" style="left:772px;top:621.5px;width:20px;height:18.5px;background:#dadada;border-radius:3px"></div>
<svg style="left:775px;top:624.5px" width="14" height="13" viewBox="0 0 14 13"><rect x="1" y="1" width="12" height="11" fill="none" stroke="#555" stroke-width="1.1"/><path d="M1 4.5h12 M5 1v11" stroke="#555" stroke-width="1.1"/></svg>
<div class="a" style="left:1017px;top:630.5px;width:28px;height:1px;background:#aaa"></div>
<svg style="left:1058px;top:626px" width="10" height="10" viewBox="0 0 10 10"><path d="M5 0.5v9 M0.5 5h9" stroke="#333" stroke-width="1.5"/></svg>

<!-- ============ CHAT BUBBLE ============ -->
<div class="a" style="left:0;top:548.3px;width:104px;height:29.7px;background:rgba(108,108,108,0.8);border-radius:7px"></div>
<svg style="left:6.5px;top:554.5px" width="16" height="16" viewBox="0 0 16 16"><circle cx="8" cy="8" r="7.2" fill="none" stroke="#b0b0b0" stroke-width="1.1"/><path d="M5.3 5v2 M10.7 5v2" stroke="#b0b0b0" stroke-width="1.1"/><path d="M5 9.5C6 12 10 12 11 9.5" fill="none" stroke="#b0b0b0" stroke-width="1.1"/></svg>
<div class="t" style="left:28.5px;top:556px;font-size:12px;color:#b9b9b9;letter-spacing:-0.3px">说点什么...</div>

<!-- ============ BAIDU DRAG ============ -->
<div class="a" style="left:1017px;top:565px;width:63px;height:33.5px;background:#eaf4fd;border:1px solid #9fd0f5;border-left:none"></div>
<div class="a" style="left:1017px;top:565px;width:25px;height:33.5px;background:linear-gradient(135deg,#1aa3ff,#0f8ff0);border-radius:0 6px 6px 0"></div>
<svg style="left:1019px;top:574px" width="18" height="15" viewBox="0 0 18 15"><circle cx="9" cy="4.5" r="3.3" fill="none" stroke="#fff" stroke-width="2"/><circle cx="4.5" cy="10.5" r="3.3" fill="none" stroke="#fff" stroke-width="2"/><circle cx="13.5" cy="10.5" r="3.3" fill="none" stroke="#fff" stroke-width="2"/></svg>
<div class="t" style="left:1049px;top:575px;font-size:12px;color:#1b8ff0;font-weight:bold">拖拽至</div>


<!-- ============ MEETING PANEL ============ -->
<div class="a" style="left:804.2px;top:37.7px;width:212.8px;height:602.3px;background:#323538"></div>
<div class="a" style="left:804.2px;top:67.5px;width:212.8px;height:1px;background:#232527"></div>
<svg style="left:813px;top:45px" width="13" height="16" viewBox="0 0 13 16"><rect x="3.5" y="0.5" width="6" height="10" rx="3" fill="#e6e6e6"/><path d="M1.5 7.5C1.5 13 11.5 13 11.5 7.5" fill="none" stroke="#e6e6e6" stroke-width="1.4"/><path d="M6.5 12v3" stroke="#e6e6e6" stroke-width="1.4"/></svg>
<div class="a" style="left:835.5px;top:45px;width:1px;height:17px;background:#45484b"></div>
<div class="t" style="left:843px;top:47.5px;font-size:11.5px;color:#e8e8e8">正在讲话:</div>
<svg style="left:980px;top:38px;overflow:hidden" width="36.5" height="29" viewBox="0 0 36.5 29"><path d="M8.3 24.7L3.3 18.6 15.3 6.3 20 11z" fill="#46494c" stroke="#46494c" stroke-width="1.5" stroke-linejoin="round"/><path d="M21.7 24.7L15.8 18.8 26.7 8.5 37 18.5V27L27 17.5z" fill="#46494c" stroke="#46494c" stroke-width="1.5" stroke-linejoin="round"/></svg>
<!-- dividers -->
<div class="a" style="left:804.2px;top:187.8px;width:212.8px;height:2px;background:#222426"></div>
<div class="a" style="left:804.2px;top:307.8px;width:212.8px;height:2px;background:#222426"></div>
<div class="a" style="left:804.2px;top:428.2px;width:212.8px;height:2px;background:#222426"></div>
<div class="a" style="left:804.2px;top:548.5px;width:212.8px;height:2px;background:#222426"></div>
<!-- tile 1 avatar (anime) -->
<svg style="left:877.7px;top:94.8px" width="67" height="67" viewBox="0 0 67 67">
<defs><clipPath id="c1"><circle cx="33.3" cy="33.4" r="33.2"/></clipPath></defs>
<circle cx="33.3" cy="33.4" r="33.2" fill="#eef0f2"/>
<g clip-path="url(#c1)">
<path d="M6 50C4 36 7 20 16 13C23 8 30 7.5 37 8C48 9 57 16 60 28C62 38 60 46 57 52L50 50L47 36C44 30 40 26 36 25L30 25C26 27 22 32 20 38L18 50z" fill="#3a3a3c"/>
<path d="M20 38C22 31 26 27 30 25L36 25C41 27 45 31 47 37L48 46C46 52 40 55 34 55C27 55 21 52 19 46z" fill="#fbeeea"/>
<path d="M29 25C30 34 30 40 33 44C36 40 37 34 39 25z" fill="#ffffff"/>
<path d="M19 40C22 34 25 30 29 27L27 40z M47 40C45 34 42 30 38 27L41 40z" fill="#3a3a3c"/>
<ellipse cx="27.2" cy="41.5" rx="3" ry="3.2" fill="#4d4452"/><ellipse cx="42.2" cy="41.5" rx="3" ry="3.2" fill="#4d4452"/>
<ellipse cx="34.5" cy="46.8" rx="2.3" ry="1.4" fill="#e8505e"/>
<ellipse cx="23.5" cy="46" rx="3.5" ry="2" fill="#f6cccc"/><ellipse cx="46" cy="46" rx="3.5" ry="2" fill="#f6cccc"/>
<ellipse cx="14.5" cy="43.5" rx="4" ry="4.5" fill="#f3d4cc"/><ellipse cx="54.5" cy="44.5" rx="4" ry="4.5" fill="#f3d4cc"/>
<path d="M8 49L15 53 8 58z M22 49L15 53 22 58z M48 48L55 52 48 57z M62 48L55 52 62 57z" fill="#c5dc8e"/>
<path d="M20 54C26 57 42 57 48 54L56 70H12z" fill="#f0f1ea"/>
<path d="M31 56L35 60 39 56z" fill="#c5dc8e"/>
<path d="M30 67L45 53" stroke="#777" stroke-width="1.2"/>
<path d="M13 26l3 2-3 2 M53 24l-3 2 3 2" stroke="#fff" stroke-width="1.4" fill="none"/>
</g>
</svg>
<div class="a" style="left:807.2px;top:168.8px;width:17.3px;height:17.1px;background:#f29b1b"></div>
<svg style="left:810px;top:171.5px" width="12" height="12" viewBox="0 0 12 12"><circle cx="6" cy="3.5" r="2.3" fill="#fff"/><path d="M1.5 10.5C1.5 6.5 10.5 6.5 10.5 10.5z" fill="#fff"/></svg>
<div class="lbl" style="left:824.5px;top:168.8px;width:67.2px;border-radius:0 2px 2px 0"></div>
<svg style="left:830px;top:171px" width="10" height="13" viewBox="0 0 10 13"><rect x="2.5" y="0.5" width="5" height="8" rx="2.5" fill="#e6e6e6"/><path d="M1 6C1 10.5 9 10.5 9 6" fill="none" stroke="#e6e6e6" stroke-width="1.2"/><path d="M5 9.5v3" stroke="#e6e6e6" stroke-width="1.2"/></svg>
<div class="t" style="left:845px;top:171.5px;font-size:11.5px;color:#e6e6e6">32黄佳怡</div>
<!-- tile 2 -->
<div class="av" style="top:215.8px">刘莺</div>
<div class="lbl" style="left:807.4px;top:289px;width:56.3px"></div>
<svg style="left:811px;top:291.5px" width="12" height="13" viewBox="0 0 12 13"><rect x="3.5" y="0.5" width="5" height="8" rx="2.5" fill="#e6e6e6"/><path d="M2 6C2 10.5 10 10.5 10 6" fill="none" stroke="#e6e6e6" stroke-width="1.2"/><path d="M6 9.5v3" stroke="#e6e6e6" stroke-width="1.2"/><path d="M11 1L1 12" stroke="#d24a3a" stroke-width="1.3"/></svg>
<div class="t" style="left:827.5px;top:291.5px;font-size:11.5px;color:#e6e6e6">39刘莺</div>
<!-- tile 3 -->
<div class="av" style="top:335.8px">李明</div>
<div class="lbl" style="left:807.4px;top:409.7px;width:59.5px"></div>
<svg style="left:811px;top:412px" width="12" height="13" viewBox="0 0 12 13"><rect x="3.5" y="0.5" width="5" height="8" rx="2.5" fill="#e6e6e6"/><path d="M2 6C2 10.5 10 10.5 10 6" fill="none" stroke="#e6e6e6" stroke-width="1.2"/><path d="M6 9.5v3" stroke="#e6e6e6" stroke-width="1.2"/><path d="M11 1L1 12" stroke="#d24a3a" stroke-width="1.3"/></svg>
<div class="t" style="left:828px;top:412px;font-size:11.5px;color:#e6e6e6">18 李明</div>
<!-- tile 4 -->
<div class="av" style="top:455.8px">永德</div>
<div class="lbl" style="left:807.4px;top:530px;width:70px"></div>
<svg style="left:811px;top:532.5px" width="12" height="13" viewBox="0 0 12 13"><rect x="3.5" y="0.5" width="5" height="8" rx="2.5" fill="#e6e6e6"/><path d="M2 6C2 10.5 10 10.5 10 6" fill="none" stroke="#e6e6e6" stroke-width="1.2"/><path d="M6 9.5v3" stroke="#e6e6e6" stroke-width="1.2"/><path d="M11 1L1 12" stroke="#d24a3a" stroke-width="1.3"/></svg>
<div class="t" style="left:827px;top:532.5px;font-size:11.5px;color:#e6e6e6">21 林永德</div>
<!-- tile 5 avatar (bunny) -->
<svg style="left:877.7px;top:577px" width="67" height="67" viewBox="0 0 67 67">
<defs><clipPath id="c5"><circle cx="33.3" cy="33.4" r="33.2"/></clipPath></defs>
<circle cx="33.3" cy="33.4" r="33.2" fill="#fbfbfb"/>
<g clip-path="url(#c5)">
<path d="M5 9C11 11 20 18 25 25L20 29C13 23 7 15 5 9z" fill="#c8a394"/>
<path d="M8.5 12C13 14 18 19 21 24L19 25C15 20 11 16 8.5 12z" fill="#e6c9bd"/>
<path d="M52 4C50 10 45 17 40 22L45 25C49 19 53 11 52 4z" fill="#c8a394"/>
<path d="M10 67C8 46 14 26 32 20C48 18 58 30 58 50L56 67z" fill="#c29b87"/>
<path d="M22 38C25 31 32 28 38 30C44 33 49 38 50 44L49 58C44 63 30 63 25 58z" fill="#fcf7ea"/>
<path d="M22 38C28 32 36 28 44 33C38 34 33 38 30 44z" fill="#c29b87"/>
<circle cx="30.3" cy="42.5" r="2.6" fill="#8fd0dc"/><circle cx="46" cy="42.5" r="2.6" fill="#8fd0dc"/>
<path d="M35 47q1.5 1.5 3 0q1.5 1.5 3 0" fill="none" stroke="#b0806a" stroke-width="0.8"/>
<path d="M31 67L37 56 43 58 47 67z" fill="#8b86ba"/>
<path d="M24 58L30 64 26 67H20z M50 58L46 66 52 67z" fill="#5fb7d3"/>
</g>
</svg>

<!-- ============ TOAST ============ -->
<div class="a" style="left:348px;top:4px;width:403px;height:22.5px;background:#fff;border-radius:7px;box-shadow:0 1px 5px rgba(0,0,0,0.16)"></div>
<svg style="left:355.5px;top:9.3px" width="13" height="13" viewBox="0 0 13 13"><circle cx="6.5" cy="6.5" r="6.3" fill="#1f7cf5"/><circle cx="6.5" cy="3.6" r="1" fill="#fff"/><path d="M6.5 5.6v4.8" stroke="#fff" stroke-width="1.6"/></svg>
<div class="t" style="left:375.5px;top:11px;font-size:11.5px;color:#333;letter-spacing:-0.43px">已有超过2人提前入会，会议剩余时长22分钟。<span style="color:#2a7ce0">升级专业版</span>即享不限时会议</div>
<svg style="left:733px;top:11px" width="9" height="9" viewBox="0 0 9 9"><path d="M0.5 0.5l8 8 M8.5 0.5l-8 8" stroke="#666" stroke-width="1.1"/></svg>

</body>
</html>
